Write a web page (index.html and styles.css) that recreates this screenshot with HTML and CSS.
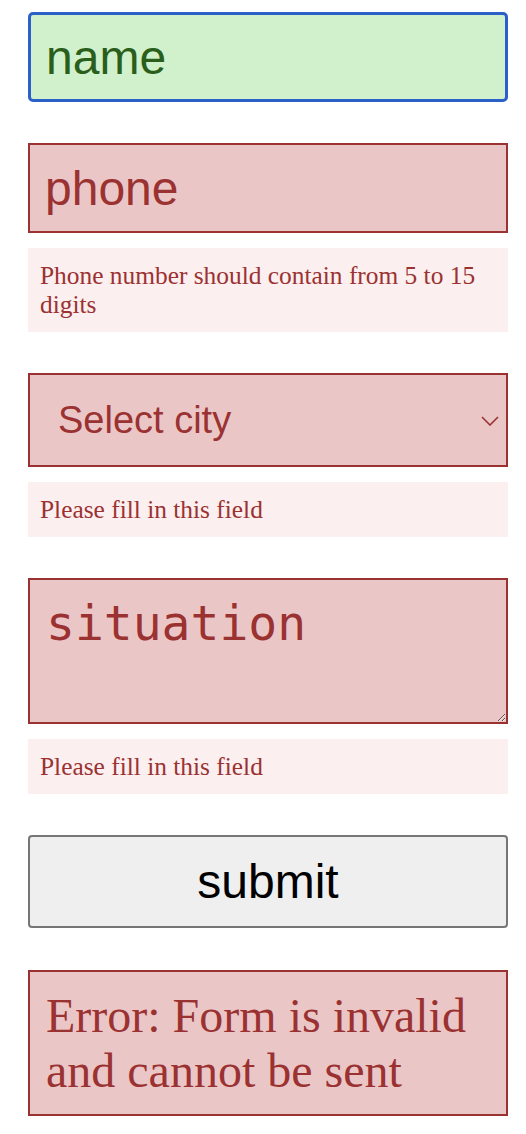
FILE: index.html
```html
<!DOCTYPE html>
<html lang="en">
<head>
    <meta charset="UTF-8">
    <meta name="viewport" content="width=device-width, initial-scale=1.0">
    <title>Contact form</title>
    <link rel="stylesheet" href="styles.css">
</head>
<body>

    <form id="contact-form" class="form" novalidate>
        <!-- Nombre: valido -->
        <div class="field">
            <input type="text" class="control control-valid" placeholder="name">
        </div>

        <!-- Telefono: invalido -->
        <div class="field">
            <input type="text" class="control control-invalid" placeholder="phone">
            <p class="message">Phone number should contain from 5 to 15 digits</p>
        </div>

        <div class="field">
            <div class="select-wrap">
                <select class="control control-invalid select">
                    <option value="" selected disabled>Select city</option>
                    <option value="kyiv">Kyiv</option>
                    <option value="lviv">Lviv</option>
                    <option value="odesa">Odesa</option>
                </select>
                <svg class="chevron" width="18" height="10" viewBox="0 0 18 10">
                    <polyline points="1,1 9,9 17,1" fill="none" stroke="#9b3232" stroke-width="1.6"/>
                </svg>
            </div>
            <p class="message">Please fill in this field</p>
        </div>

        <div class="field">
            <textarea class="control control-invalid textarea" placeholder="situation"></textarea>
            <p class="message">Please fill in this field</p>
        </div>

        <div class="field">
            <button type="submit" class="submit">submit</button>
        </div>

        <div class="form-error">Error: Form is invalid and cannot be sent</div>
    </form>

</body>
</html>
```

FILE: styles.css
```css
/* Estilos basicos */
body {
    margin: 0;
    padding: 0;
    background-color: #fff;
    font-family: "Liberation Serif", "Times New Roman", serif;
}
.form {
    width: 480px;
    margin: 0;
    padding: 12px 0 0 28px;
    display: flex;
    flex-direction: column;
}
.field {
    display: flex;
    flex-direction: column;
    margin-bottom: 41px;
}
.control {
    box-sizing: border-box;
    width: 100%;
    margin: 0;
    font-family: "Liberation Sans", Arial, sans-serif;
    font-size: 48px;
    outline: none;
}
input.control {
    height: 90px;
    padding: 0 15px;
}
.control::placeholder {
    color: inherit;
    opacity: 1;
}
.control-valid {
    background-color: #d1f0cc;
    color: #2a5e1b;
    border: 3px solid #2b60c8;
    border-radius: 5px;
    padding-left: 14px;
}
.control-invalid {
    background-color: #ebc6c7;
    color: #9b3232;
    border: 2px solid #9b3232;
    border-radius: 0;
}
.select-wrap {
    position: relative;
}
.select {
    -webkit-appearance: none;
    appearance: none;
    height: 94px;
    padding: 0 40px 0 28px;
    font-size: 38px;
}
.chevron {
    position: absolute;
    right: 9px;
    top: 43px;
    pointer-events: none;
}
.textarea {
    height: 146px;
    padding: 15px 16px;
    font-family: "DejaVu Sans Mono", "Liberation Mono", monospace;
    font-size: 48px;
    resize: both;
}
.message {
    margin: 15px 0 0 0;
    padding: 13px 12px;
    background-color: #fcefef;
    color: #9b3232;
    font-size: 25.4px;
    line-height: 29px;
}
.submit {
    box-sizing: border-box;
    width: 100%;
    height: 93px;
    margin: 0;
    background-color: #efefef;
    border: 2px solid #767676;
    border-radius: 4px;
    color: #000;
    font-family: "Liberation Sans", Arial, sans-serif;
    font-size: 48px;
    cursor: pointer;
}
.submit:hover {
    background-color: #e5e5e5;
}
.form-error {
    box-sizing: border-box;
    margin-top: 1px;
    padding: 16px 16px;
    background-color: #ebc6c7;
    border: 2px solid #9b3232;
    color: #9b3232;
    font-size: 48px;
    line-height: 55px;
}
```
